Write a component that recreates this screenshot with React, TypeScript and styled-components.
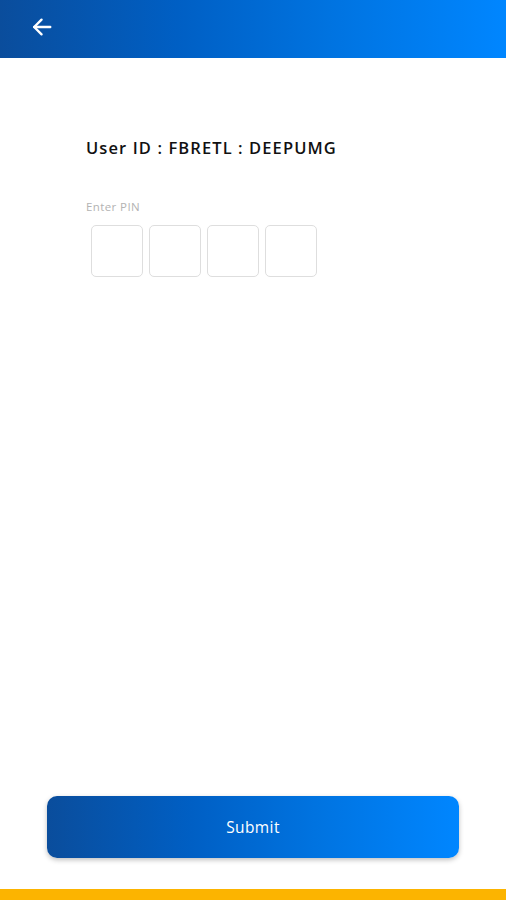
import React from "react";
import styled, { createGlobalStyle } from "styled-components";

const Global = createGlobalStyle`
  html, body { margin: 0; padding: 0; background: #fff; }
  body { font-family: "Open Sans", "Liberation Sans", sans-serif; }
  #root { min-height: 900px; }
`;

const Page = styled.div`
  width: 506px;
  height: 900px;
  display: flex;
  flex-direction: column;
  background: #fff;
  overflow: hidden;
`;

const Header = styled.header`
  height: 58px;
  flex-shrink: 0;
  display: flex;
  align-items: center;
  padding-left: 31px;
  background: linear-gradient(90deg, #0a4d9c 0%, #005fc4 35%, #0073e0 65%, #0086ff 100%);
`;

const BackButton = styled.button`
  width: 22px;
  height: 22px;
  padding: 0;
  margin-top: -4px;
  border: none;
  background: transparent;
  display: flex;
  align-items: center;
  justify-content: center;
  cursor: pointer;
`;

const Content = styled.main`
  flex: 1;
  display: flex;
  flex-direction: column;
  padding: 79px 0 0 86px;
`;

const UserId = styled.h1`
  margin: 0;
  font-family: "Open Sans", sans-serif;
  font-weight: 600;
  font-size: 16.5px;
  line-height: 22px;
  color: #111;
  letter-spacing: 1.1px;
`;

const PinLabel = styled.label`
  margin-top: 41px;
  font-size: 11.5px;
  line-height: 14px;
  letter-spacing: 0.4px;
  color: #b3b3b3;
`;

const PinRow = styled.div`
  display: flex;
  gap: 6px;
  margin-top: 11px;
  margin-left: 5px;
`;

const PinBox = styled.input`
  width: 52px;
  height: 52px;
  box-sizing: border-box;
  border: 1.5px solid #dedede;
  border-radius: 5px;
  background: #fff;
  text-align: center;
  font-size: 20px;
  outline: none;
`;

const Footer = styled.div`
  display: flex;
  justify-content: center;
  padding: 0 0 31px;
`;

const SubmitButton = styled.button`
  width: 412px;
  height: 62px;
  border: none;
  border-radius: 10px;
  background: linear-gradient(90deg, #0a4d9c 0%, #005fc4 35%, #0073e0 65%, #0086ff 100%);
  box-shadow: 0 2px 5px rgba(0, 0, 0, 0.25);
  color: #fff;
  font-family: "Open Sans", sans-serif;
  font-weight: 500;
  font-size: 15.5px;
  letter-spacing: 0.4px;
  cursor: pointer;
`;

const BottomBar = styled.div`
  height: 11px;
  flex-shrink: 0;
  background: #fcb400;
`;

export default function App() {
  return (
    <>
      <Global />
      <Page>
        <Header>
          <BackButton aria-label="Back">
            <svg width="22" height="22" viewBox="0 0 24 24" fill="none" stroke="#fff" strokeWidth="2.6" strokeLinecap="round" strokeLinejoin="round">
              <path d="M21 12H3.5" />
              <path d="M11.5 4L3.5 12L11.5 20" />
            </svg>
          </BackButton>
        </Header>
        <Content>
          <UserId>User ID : FBRETL : DEEPUMG</UserId>
          <PinLabel>Enter PIN</PinLabel>
          <PinRow>
            <PinBox maxLength={1} />
            <PinBox maxLength={1} />
            <PinBox maxLength={1} />
            <PinBox maxLength={1} />
          </PinRow>
        </Content>
        <Footer>
          <SubmitButton>Submit</SubmitButton>
        </Footer>
        <BottomBar />
      </Page>
    </>
  );
}
